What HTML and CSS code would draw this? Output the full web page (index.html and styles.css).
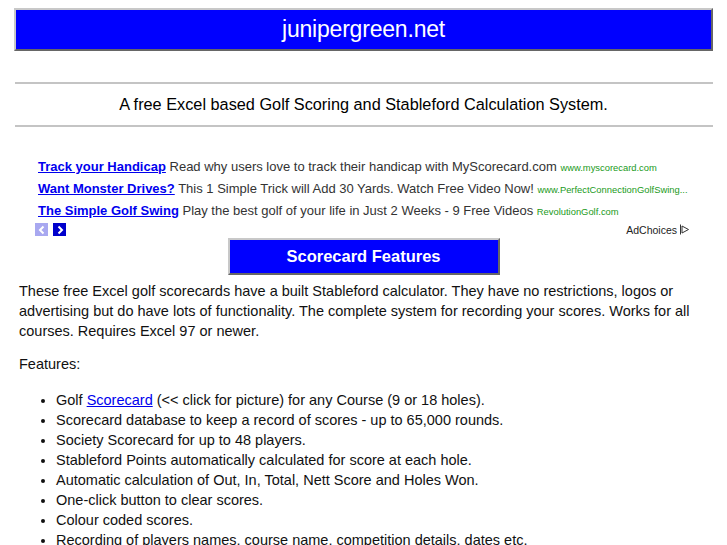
FILE: index.html
```html
<!DOCTYPE html>
<html>
<head>
<meta charset="utf-8">
<title>junipergreen.net</title>
<link rel="stylesheet" href="styles.css">
</head>
<body>
<div class="site-header"><span class="site-title">junipergreen.net</span></div>
<hr class="rule rule-top">
<div class="tagline">A free Excel based Golf Scoring and Stableford Calculation System.</div>
<hr class="rule rule-bottom">
<div class="ads">
  <div class="ad-row"><a class="ad-title" href="#">Track your Handicap</a> <span class="ad-text">Read why users love to track their handicap with MyScorecard.com</span> <span class="ad-url">www.myscorecard.com</span></div>
  <div class="ad-row"><a class="ad-title" href="#">Want Monster Drives?</a> <span class="ad-text">This 1 Simple Trick will Add 30 Yards. Watch Free Video Now!</span> <span class="ad-url">www.PerfectConnectionGolfSwing...</span></div>
  <div class="ad-row"><a class="ad-title" href="#">The Simple Golf Swing</a> <span class="ad-text">Play the best golf of your life in Just 2 Weeks - 9 Free Videos</span> <span class="ad-url">RevolutionGolf.com</span></div>
  <div class="ad-foot">
    <div class="ad-nav">
      <span class="nav-btn nav-prev"><svg width="12" height="12" viewBox="0 0 12 12"><path d="M7.5 2.5 L4 6 L7.5 9.5" fill="none" stroke="#fff" stroke-width="2"/></svg></span>
      <span class="nav-btn nav-next"><svg width="12" height="12" viewBox="0 0 12 12"><path d="M4.5 2.5 L8 6 L4.5 9.5" fill="none" stroke="#fff" stroke-width="2"/></svg></span>
    </div>
    <div class="adchoices">AdChoices <svg width="11" height="11" viewBox="0 0 11 11"><path d="M1.5 0.5 V10.5" stroke="#333" stroke-width="1" fill="none"/><path d="M3 2 L9.5 5.5 L3 9 Z" fill="none" stroke="#333" stroke-width="1"/></svg></div>
  </div>
</div>
<div class="section-head"><span>Scorecard Features</span></div>
<div class="content">
  <p class="intro">These free Excel golf scorecards have a built Stableford calculator. They have no restrictions, logos or advertising but do have lots of functionality. The complete system for recording your scores. Works for all courses. Requires Excel 97 or newer.</p>
  <p class="features-label">Features:</p>
  <ul class="features">
    <li>Golf <a href="#">Scorecard</a> (&lt;&lt; click for picture) for any Course (9 or 18 holes).</li>
    <li>Scorecard database to keep a record of scores - up to 65,000 rounds.</li>
    <li>Society Scorecard for up to 48 players.</li>
    <li>Stableford Points automatically calculated for score at each hole.</li>
    <li>Automatic calculation of Out, In, Total, Nett Score and Holes Won.</li>
    <li>One-click button to clear scores.</li>
    <li>Colour coded scores.</li>
    <li>Recording of players names, course name, competition details, dates etc.</li>
  </ul>
</div>
</body>
</html>
```
FILE: styles.css
```css
html, body {
  margin: 0;
  padding: 0;
  background: #fff;
}
body {
  font-family: "Liberation Sans", Arial, sans-serif;
  color: #111;
  overflow: hidden;
}
.site-header {
  margin: 8px 14px 0 14px;
  height: 39px;
  background: #0000ff;
  border: 2px solid;
  border-color: #c8c8c8 #666 #666 #c8c8c8;
  display: flex;
  align-items: center;
  justify-content: center;
}
.site-title {
  color: #fff;
  font-size: 23px;
  letter-spacing: -0.2px;
}
.rule {
  margin: 0 14px 0 15px;
  border: 0;
  height: 2px;
  background: #c4c4c4;
}
.rule-top {
  margin-top: 31px;
}
.tagline {
  text-align: center;
  font-size: 16.3px;
  color: #000;
  height: 41px;
  line-height: 41px;
}
.ads {
  margin: 29px 37px 0 35px;
}
.ad-row {
  padding-left: 3px;
  font-size: 13px;
  height: 22px;
  line-height: 22px;
  white-space: nowrap;
  color: #333;
}
.ad-title {
  color: #0000ee;
  font-weight: bold;
}
.ad-url {
  color: #1a9a1a;
  font-size: 9.4px;
}
.ad-foot {
  display: flex;
  justify-content: space-between;
  align-items: center;
  height: 15px;
}
.ad-nav {
  display: flex;
  gap: 5px;
}
.nav-btn {
  width: 13px;
  height: 13px;
  display: flex;
  align-items: center;
  justify-content: center;
}
.nav-prev { background: #a8a8f0; }
.nav-next { background: #0000cc; }
.adchoices {
  font-size: 10.5px;
  color: #222;
  display: flex;
  align-items: center;
  gap: 2px;
}
.section-head {
  margin: 1px auto 0 auto;
  width: 268px;
  height: 33px;
  background: #0000ff;
  border: 2px solid;
  border-color: #c8c8c8 #666 #666 #c8c8c8;
  display: flex;
  align-items: center;
  justify-content: center;
}
.section-head span {
  color: #fff;
  font-weight: bold;
  font-size: 16.5px;
}
.content {
  margin: 0 19px;
  font-size: 14.5px;
  line-height: 20px;
  color: #111;
}
.intro {
  margin: 6px 0 13px 0;
}
.features-label {
  margin: 0 0 16px 0;
}
.features {
  margin: 0;
  padding-left: 37px;
}
.features a {
  color: #0000ee;
}
```
